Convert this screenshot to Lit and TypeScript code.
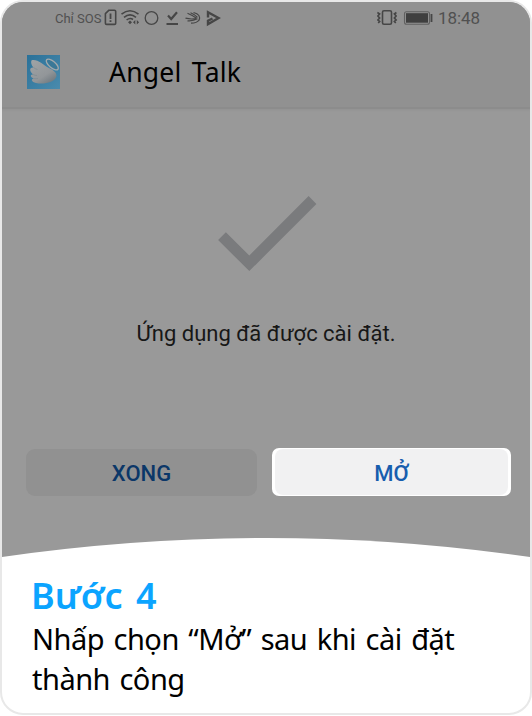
import { LitElement, html, css } from "lit";
import { customElement } from "lit/decorators.js";

@customElement("status-bar")
class StatusBar extends LitElement {
  static styles = css`
    :host { display: flex; height: 32px; align-items: center; padding: 0 49px 0 53px; box-sizing: border-box; color: #505050; font-family: Roboto, sans-serif; }
    .sos { font-size: 13px; white-space: nowrap; width: 49px; }
    .clock { font-size: 17px; letter-spacing: -0.1px; width: 43px; }
    .left { width: 120px; height: 20px; flex: none; }
    .right { width: 58px; height: 20px; flex: none; margin: 0 3px 0 auto; }
  `;
  render() {
    return html`
      <span class="sos">Chỉ SOS</span>
      <svg class="left" viewBox="104 8 120 20" fill="none" stroke="#464646" stroke-width="1.6">
        <path d="M109 10.2H114.5Q115.7 10.2 115.7 11.4V23.2Q115.7 24.4 114.5 24.4H106.6Q105.4 24.4 105.4 23.2V13.6Z" stroke-linejoin="round" />
        <path d="M110.5 13.5V19M110.5 20.3V22" stroke-width="1.8" />
        <path d="M121.5 14.2Q130 7.3 138.5 14.2M124 17.3Q130 12.3 136 17.3M126.6 20Q130 17.2 133 19.5" />
        <path d="M130 20.6L132 22.3L130 24.2L128 22.3Z" fill="#464646" stroke="none" />
        <path d="M135.3 20L133 22.3L135.3 24.5ZM136.8 20L139.1 22.3L136.8 24.5Z" fill="#464646" stroke="none" />
        <circle cx="151.5" cy="18" r="6.3" stroke-width="1.3" />
        <path d="M168 15.6L171.2 19L177 12.3" stroke-width="2.2" /><path d="M166.5 24H178" stroke-width="2" />
        <path d="M187.5 13.2Q193 15.5 196.5 18.2M190.5 12.8Q195 14.5 197.5 17.4M193.5 12.5Q201.5 14.5 199 20.5M185.5 18.2Q192 19.8 196.5 18.2M187.5 20.8Q193 21.3 197.5 18.8M191 23.2Q197 23.2 199 20" stroke-width="1.2" />
        <path d="M208 17.5V12.3L218.5 18L208 24.2V20.8L212.5 18.5" stroke-width="2.4" />
      </svg>
      <svg class="right" viewBox="377 8 58 20" fill="none" stroke="#464646" stroke-width="1.4">
        <rect x="382.5" y="10.7" width="9" height="13.6" rx="1.5" stroke-width="1.6" />
        <path d="M377.4 12.5L379.6 14L377.9 16L379.6 18L377.9 20L379.6 21.5L378.2 23M396.4 12.5L394.4 14L396.1 16L394.4 18L396.1 20L394.4 21.5L395.8 23" stroke-width="1.7" />
        <rect x="404.5" y="11.7" width="25" height="12.5" rx="2" stroke="#606060" stroke-width="1.1" />
        <rect x="406" y="13.2" width="22" height="9.5" fill="#3f3f3f" stroke="none" />
        <path d="M431.5 14V22" stroke-width="1.8" />
      </svg>
      <span class="clock">18:48</span>`;
  }
}

@customElement("app-root")
class AppRoot extends LitElement {
  static styles = css`
    :host { display: block; width: 532px; height: 716px; background: #fff; overflow: hidden; }
    .card { box-sizing: border-box; width: 532px; height: 715px; border: 2px solid #e8e8e8; border-radius: 23px; background: #fff; overflow: hidden; display: flex; flex-direction: column; }
    .phone { position: relative; height: 556px; background: #999; display: flex; flex-direction: column; flex: none; }
    .top { height: 107px; box-sizing: border-box; background: #919191; border-bottom: 2px solid #8c8c8c; box-shadow: 0 1px 2px #919191; }
    .bar { display: flex; height: 72px; align-items: center; padding-left: 25px; }
    .logo { width: 33px; height: 34px; margin-top: 4px; }
    .title { font: 26.5px/34px "Noto Sans", sans-serif; letter-spacing: 0.25px; word-spacing: 3px; color: #000; margin: 3px 0 0 49px; white-space: nowrap; }
    .check { width: 100px; height: 76px; margin: 87px 0 0 215px; flex: none; }
    .message { font: 22px/30px Roboto, sans-serif; color: #171717; text-align: center; margin-top: 47px; white-space: nowrap; }
    .actions { display: flex; gap: 15px; margin: 100px 0 0 24px; }
    .btn { box-sizing: border-box; height: 47px; border-radius: 9px; text-align: center; font: 500 22px/49px Roboto, sans-serif; }
    .done { width: 231px; background: #919191; color: #0b3768; }
    .open { width: 239px; background: #fff; padding: 0 3px; margin-top: -1px; height: 48px; border: solid transparent; border-width: 1px 0; border-radius: 7px; color: #175eae; }
    .face { display: block; height: 46px; line-height: 49px; background: #f1f1f2; border-radius: 8px; }
    .arc { position: absolute; left: 0; bottom: 0; width: 528px; height: 21px; display: block; }
    .caption { padding: 18px 30px; font-family: "Noto Sans", sans-serif; color: #000; }
    .step { margin: 0 0 0 -1px; font-size: 36px; line-height: 40px; font-weight: 600; word-spacing: 4px; color: #0ba4ff; white-space: nowrap; }
    .text { margin: 3px 0 0; font-size: 29px; line-height: 40px; letter-spacing: -0.5px; word-spacing: 2.4px; white-space: nowrap; }
  `;
  render() {
    return html`
      <div class="card">
        <div class="phone">
          <div class="top">
            <status-bar></status-bar>
            <div class="bar">
              <svg class="logo" viewBox="0 0 33 34">
                <defs>
                  <linearGradient id="sky" x2="1" y2="1"><stop stop-color="#2a7199" /><stop offset="1" stop-color="#4a8bad" /></linearGradient>
                  <linearGradient id="wing" x2=".7" y2="1"><stop stop-color="#a0a4a6" /><stop offset=".7" stop-color="#929699" /><stop offset="1" stop-color="#737c82" /></linearGradient>
                </defs>
                <rect width="33" height="34" fill="url(#sky)" />
                <path d="M5 5C3.5 6 4 10 6.5 12.5C3 12 1.5 15 6 19.5C3 19 3 22.5 7 23.5C3.5 24 4.5 27 9 28C16 29.5 28 28 29.5 21C29.5 17 26 15 21 12.5C16 9.5 11 4 5 5Z" fill="url(#wing)" />
                <path d="M6.5 12.5Q8.5 14 10.5 14.5M6 19.5Q8 20.5 10 20.5M7 23.5Q9 24 11 23.5" fill="none" stroke="#7e8b92" stroke-width=".7" />
                <ellipse cx="25.3" cy="9.5" rx="7.4" ry="3.2" transform="rotate(40 25.3 9.5)" fill="#3a7897" stroke="#a2a8ab" stroke-width="1.3" />
              </svg>
              <span class="title">Angel Talk</span>
            </div>
          </div>
          <svg class="check" viewBox="217 196 100 76"><path d="M222 236.2L249.3 263.3L312.5 200" fill="none" stroke="#7a7b7d" stroke-width="11" /></svg>
          <div class="message">Ứng dụng đã được cài đặt.</div>
          <div class="actions">
            <div class="btn done">XONG</div>
            <div class="btn open"><span class="face">MỞ</span></div>
          </div>
          <svg class="arc" viewBox="0 0 528 21"><path d="M0 20Q264 -18 528 20V21H0Z" fill="#fff" /></svg>
        </div>
        <div class="caption">
          <h1 class="step">Bước 4</h1>
          <p class="text">Nhấp chọn “Mở” sau khi cài đặt<br />thành công</p>
        </div>
      </div>`;
  }
}
